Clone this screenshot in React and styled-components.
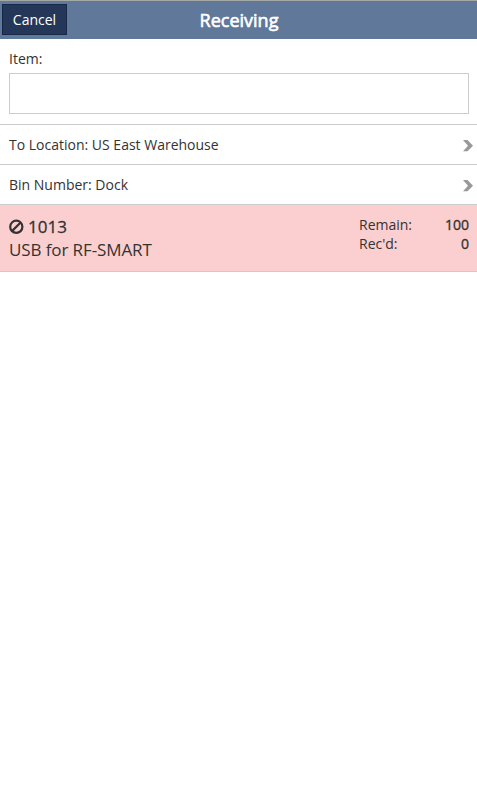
import React from "react";
import styled, { createGlobalStyle } from "styled-components";

const Global = createGlobalStyle`
  *{box-sizing:border-box}
  body{margin:0;background:#fff;color:#333;font:14px/20px "Open Sans",sans-serif}
`;
const Header = styled.header`
  height:39px;display:grid;grid-template-columns:1fr auto 1fr;align-items:start;
  background:#607899;border-top:1px solid #a5a8a5;padding:3px 2px 0;
`;
const Title = styled.h1`
  margin:4px 0 0 1px;font-size:18px;font-weight:400;line-height:24px;color:#fff;
  -webkit-text-stroke:0.6px #fff;
`;
const Cancel = styled.button`
  justify-self:start;width:65px;height:31px;padding:0 0 1px;border:1px solid #162747;background:#243759;
  color:#fff;font:14px "Open Sans",sans-serif;
`;
const Field = styled.label`
  display:block;height:86px;padding:10px 8px 0 9px;border-bottom:1px solid #ccc;
`;
const Input = styled.input`
  display:block;width:100%;height:41px;margin-top:4px;border:1px solid #ccc;border-radius:0;outline:0;
`;
const Row = styled.div`
  height:40px;display:flex;align-items:center;justify-content:space-between;
  padding:0 4px 0 9px;border-bottom:1px solid #ccc;
`;
const Item = styled.section`
  height:67px;display:flex;justify-content:space-between;background:#fbcfcf;
  border-bottom:1px solid #ccc;padding:10px 8px 0 9px;
`;
const Name = styled.div`font-size:17px;line-height:23px;letter-spacing:-0.1px;`;
const Code = styled.div`
  display:flex;align-items:center;gap:4px;letter-spacing:0;-webkit-text-stroke:0.3px #333;
`;
const Totals = styled.dl`
  width:110px;margin:0;display:grid;grid-template-columns:1fr auto;grid-auto-rows:19px;line-height:19px;
`;
const Value = styled.dd`margin:0;text-align:right;-webkit-text-stroke:0.35px #333;`;

const Chevron = () => (
  <svg width="10" height="14" viewBox="0 0 10 14"><path d="M0 2h4.5L10 7.7 4.5 13.3H0l5-5.6z" fill="#999" /></svg>
);
const Ban = () => (
  <svg width="15" height="15" viewBox="0 0 15 15" fill="none" stroke="#333" strokeWidth="2.2">
    <circle cx="7.3" cy="7.8" r="6.1" /><path d="M3 12.1L11.6 3.5" />
  </svg>
);

export default function App() {
  return (
    <>
      <Global />
      <Header><Cancel>Cancel</Cancel><Title>Receiving</Title></Header>
      <Field>Item:<Input /></Field>
      <Row>To Location: US East Warehouse<Chevron /></Row>
      <Row>Bin Number: Dock<Chevron /></Row>
      <Item>
        <Name><Code><Ban />1013</Code>USB for RF-SMART</Name>
        <Totals><dt>Remain:</dt><Value>100</Value><dt>Rec'd:</dt><Value>0</Value></Totals>
      </Item>
    </>
  );
}
